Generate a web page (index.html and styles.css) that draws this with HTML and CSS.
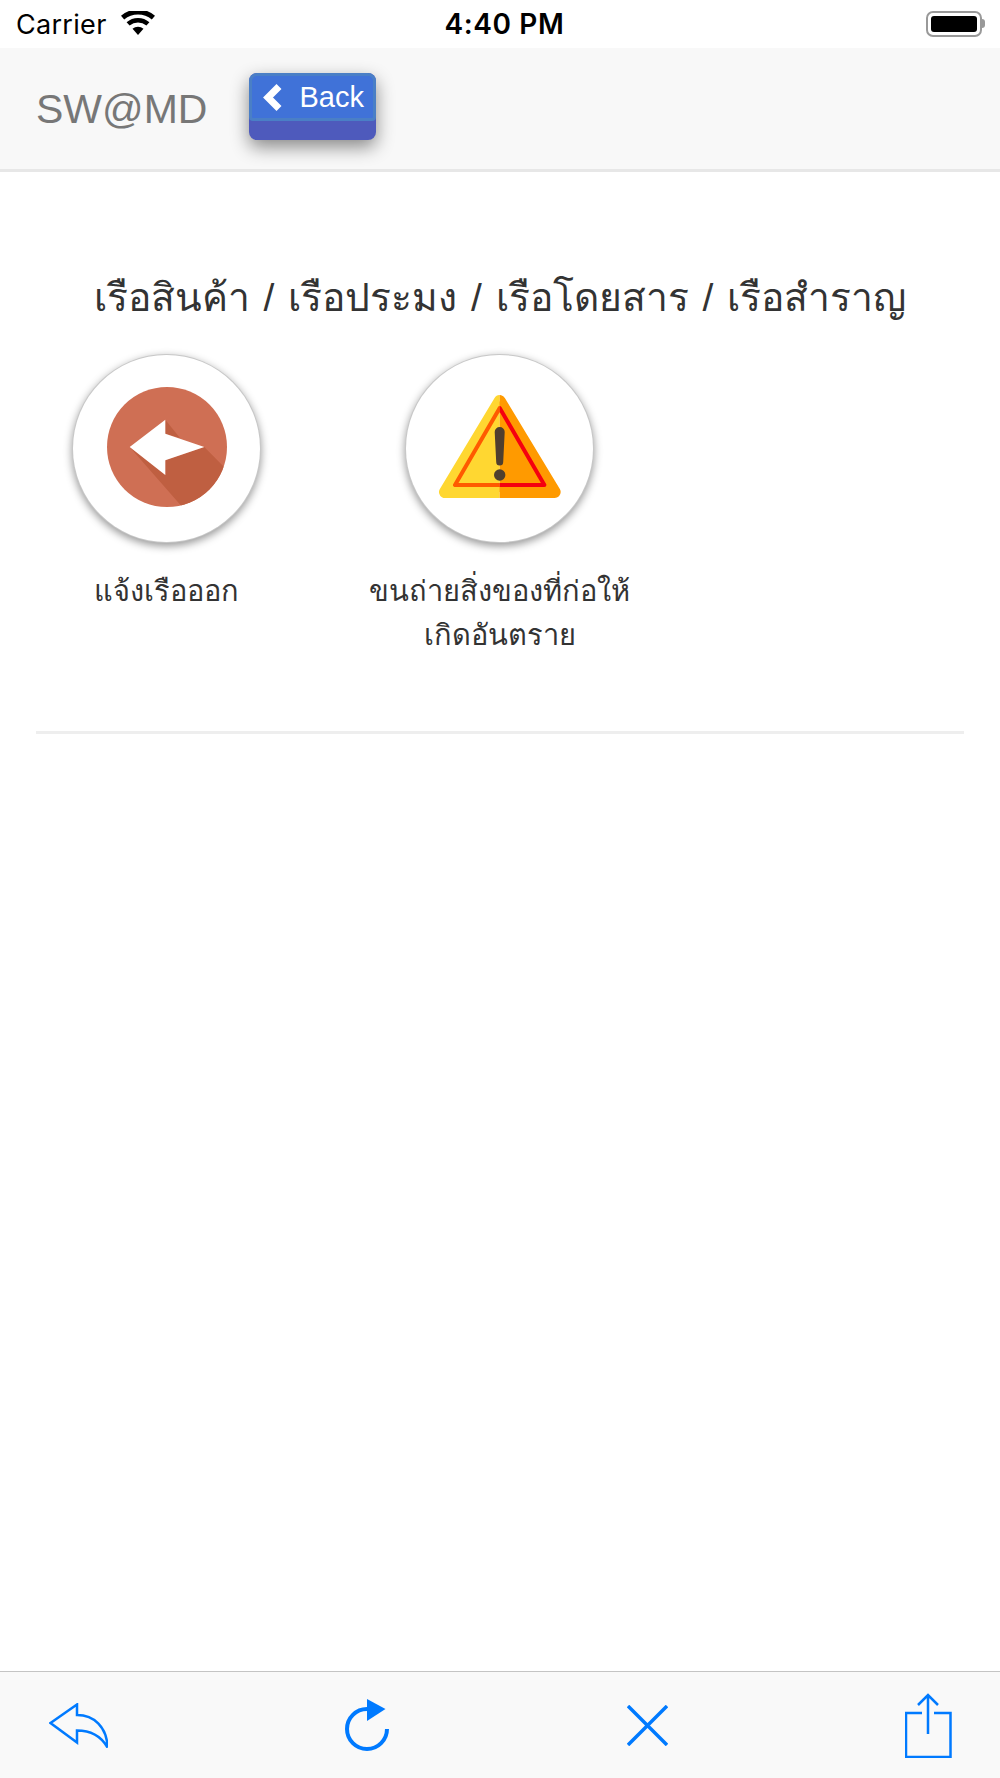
FILE: index.html
```html
<!DOCTYPE html>
<html>
	<head>
		<meta charset="utf-8" />
		<title>SW@MD</title>
		<link rel="stylesheet" href="styles.css">
	</head>
	<body>
		<div class="status">
			<div class="status-left">
				<span class="carrier">Carrier</span>
				<svg class="wifi" width="34" height="24" viewBox="0 0 34 24">
					<path d="M17 24 L11.5 17.8 A8.5 8.5 0 0 1 22.5 17.8 Z" fill="#000"/>
					<path d="M8.6 14.6 L5.6 11.2 A17.5 17.5 0 0 1 28.4 11.2 L25.4 14.6 A13 13 0 0 0 8.6 14.6 Z" fill="#000"/>
					<path d="M3.2 8.4 L0 4.8 A26 26 0 0 1 34 4.8 L30.8 8.4 A21.5 21.5 0 0 0 3.2 8.4 Z" fill="#000"/>
				</svg>
			</div>
			<span class="clock">4:40 PM</span>
			<div class="status-right">
				<div class="battery"><div class="battery-fill"></div></div>
			</div>
		</div>

		<div class="navbar">
			<span class="brand">SW@MD</span>
			<a class="btn-back">
				<span class="btn-face">
					<svg width="22" height="27" viewBox="0 0 22 27"><path d="M17 2.5 L6 13.5 L17 24.5" fill="none" stroke="#fff" stroke-width="7"/></svg>
					Back
				</span>
			</a>
		</div>

		<!-- เมนู -->
		<div class="content">
			<h3 class="title">เรือสินค้า / เรือประมง / เรือโดยสาร / เรือสำราญ</h3>
			<div class="menu">
				<div class="menu-item">
					<div class="circle">
						<svg width="120" height="120" viewBox="0 0 120 120">
							<defs><clipPath id="disc"><circle cx="60" cy="60" r="60"/></clipPath></defs>
							<circle cx="60" cy="60" r="60" fill="#cf6f54"/>
							<g clip-path="url(#disc)" fill="#bf5f41">
								<polygon points="22.7,60 58.3,88 58.3,73.3 97.3,60 130,93 130,130 84,130"/>
								<polygon points="58.3,32.7 73,51 58.3,46.7"/>
							</g>
							<polygon points="22.7,60 58.3,32.7 58.3,46.7 97.3,60 58.3,73.3 58.3,88" fill="#fff"/>
						</svg>
					</div>
					<p>แจ้งเรือออก</p>
				</div>
				<div class="menu-item">
					<div class="circle">
						<svg width="122" height="103" viewBox="0 0 122 103">
							<defs>
								<clipPath id="leftHalf"><rect x="0" y="0" width="60.7" height="103"/></clipPath>
								<clipPath id="rightHalf"><rect x="60.7" y="0" width="62" height="103"/></clipPath>
							</defs>
							<polygon clip-path="url(#leftHalf)" points="60.7,6 6,97 115.7,97" fill="#ffd731" stroke="#ffd731" stroke-width="12" stroke-linejoin="round"/>
							<polygon clip-path="url(#rightHalf)" points="60.7,6 6,97 115.7,97" fill="#ff9a00" stroke="#ff9a00" stroke-width="12" stroke-linejoin="round"/>
							<polygon clip-path="url(#leftHalf)" points="60.7,13 16,90 105.4,90" fill="none" stroke="#ff5a00" stroke-width="4" stroke-linejoin="round"/>
							<polygon clip-path="url(#rightHalf)" points="60.7,13 16,90 105.4,90" fill="none" stroke="#f5000f" stroke-width="4" stroke-linejoin="round"/>
							<path d="M55.7 37 A5 5 0 0 1 65.7 37 L64.2 67 A3.5 3.5 0 0 1 57.2 67 Z" fill="#4f3f2e"/>
							<circle cx="60.7" cy="80" r="5.7" fill="#4f3f2e"/>
						</svg>
					</div>
					<p>ขนถ่ายสิ่งของที่ก่อให้<br>เกิดอันตราย</p>
				</div>
			</div>
			<div class="divider"></div>
		</div>

		<div class="toolbar">
			<svg width="59" height="45" viewBox="0 0 59 45"><path d="M1.5 20 L28 1.5 L28 12 C45 12 58 24 58.5 44.5 C52 33 42 27.5 28 27.5 L28 39.5 Z" fill="none" stroke="#007aff" stroke-width="2.5"/></svg>
			<svg width="44" height="53" viewBox="0 0 44 53">
				<path d="M42 30 A20 20 0 1 1 22 10" fill="none" stroke="#007aff" stroke-width="4"/>
				<polygon points="22,0 40.5,10 22,22" fill="#007aff"/>
			</svg>
			<svg width="41" height="41" viewBox="0 0 41 41"><path d="M1 1 L40 40 M40 1 L1 40" fill="none" stroke="#007aff" stroke-width="3.5"/></svg>
			<svg width="47" height="65" viewBox="0 0 47 65">
				<path d="M17 20 L1 20 L1 64 L45.5 64 L45.5 20 L29 20" fill="none" stroke="#007aff" stroke-width="2.5"/>
				<path d="M23 41 L23 2 M13 12 L23 2 L33 12" fill="none" stroke="#007aff" stroke-width="2.5"/>
			</svg>
		</div>
	</body>
</html>
```

FILE: styles.css
```css
*{
	margin:0px;
	padding:0px;
	box-sizing: border-box;
}
body{
	background: #fff;
	color: #333;
	font-family: "Liberation Sans", "Noto Sans", sans-serif;
	height: 1778px;
	display: flex;
	flex-direction: column;
}
.status{
	height: 48px;
	padding: 0 18px 0 16px;
	display: flex;
	align-items: center;
	color: #000;
	font-family: Inter, "Liberation Sans", sans-serif;
}
.status-left{
	flex: 1;
	display: flex;
	align-items: center;
	gap: 14px;
}
.status-right{
	flex: 1;
	display: flex;
	justify-content: flex-end;
}
.carrier{
	font-size: 27px;
	letter-spacing: .3px;
}
.clock{
	font-size: 28px;
	font-weight: 600;
	letter-spacing: .6px;
	margin-left: 11px;
}
.wifi{
	margin-top: -2px;
}
.battery{
	width: 56px;
	height: 26px;
	border: 2px solid #999;
	border-radius: 7px;
	padding: 3px;
	position: relative;
	margin-top: -1px;
}
.battery::after{
	content: "";
	position: absolute;
	left: 54px;
	top: 6px;
	width: 3px;
	height: 9px;
	background: #999;
	border-radius: 0 3px 3px 0;
}
.battery-fill{
	height: 100%;
	width: 46px;
	background: #000;
	border-radius: 3px;
}
.navbar{
	height: 124px;
	background: #f8f8f8;
	border-bottom: 3px solid #e7e7e7;
	padding: 25px 0 0 36px;
	display: flex;
	align-items: flex-start;
}
.brand{
	font-size: 41px;
	line-height: 46px;
	color: #777;
	margin-top: 13px;
}
.btn-back{
	width: 127px;
	height: 67px;
	margin-left: 42px;
	background: #4e5abc;
	border-radius: 8px;
	box-shadow: 0 7px 18px rgba(0,0,0,.45);
	display: block;
}
.btn-face{
	height: 48px;
	display: flex;
	align-items: center;
	gap: 15px;
	padding-left: 10px;
	background: #4072d8;
	border: 3px solid #4a7fc6;
	border-radius: 8px 8px 4px 4px;
	color: #fff;
	font-size: 29px;
}
.content{
	flex: 1;
	padding: 0 36px;
}
.title{
	margin-top: 97px;
	text-align: center;
	font-size: 39px;
	font-weight: normal;
	line-height: 58px;
	white-space: nowrap;
	word-spacing: 3px;
}
.menu{
	display: grid;
	grid-template-columns: repeat(3, 333.33px);
	margin: 28px -36px 0;
}
.menu-item{
	display: flex;
	flex-direction: column;
	align-items: center;
	text-align: center;
	font-size: 29px;
	line-height: 44px;
}
.menu-item p{
	white-space: nowrap;
	margin-top: 27px;
}
.circle{
	width: 187px;
	height: 187px;
	padding-bottom: 4px;
	border-radius: 50%;
	background: #fff;
	box-shadow: 0 0 0 1px #c8c8c8, 0 3px 9px 1px rgba(0,0,0,.42);
	display: flex;
	align-items: center;
	justify-content: center;
}
.divider{
	height: 3px;
	background: #eee;
	margin-top: 74px;
}
.toolbar{
	height: 107px;
	background: #f9f9f9;
	border-top: 1px solid #c4c4c4;
	padding: 0 48px 0 49px;
	display: flex;
	align-items: center;
	justify-content: space-between;
}
```
